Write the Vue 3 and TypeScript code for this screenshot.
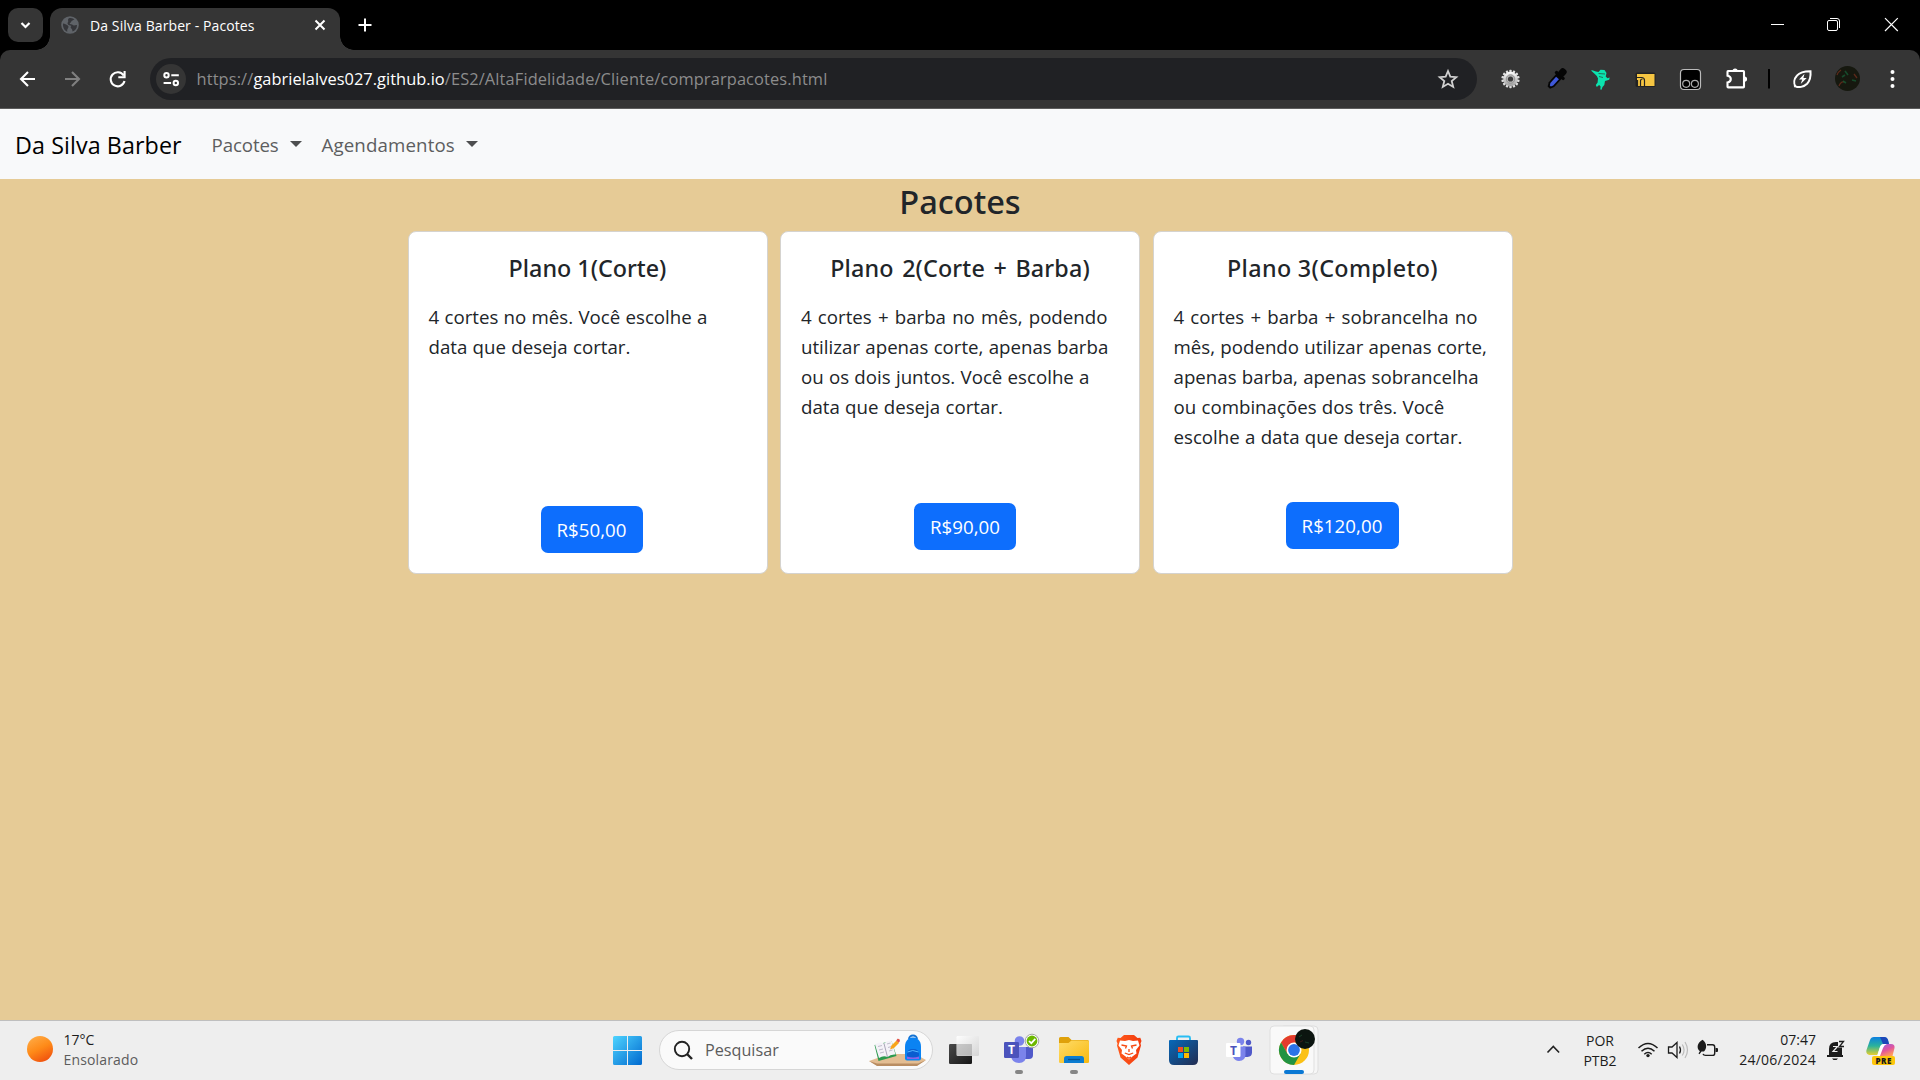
<script setup lang="ts">
interface Plan { id: string; title: string; lines: string[]; price: string }

const plans: Plan[] = [
  { id: 'p1', title: 'Plano 1(Corte)', lines: ['4 cortes no mês. Você escolhe a', 'data que deseja cortar.'], price: 'R$50,00' },
  { id: 'p2', title: 'Plano 2(Corte + Barba)', lines: ['4 cortes + barba no mês, podendo', 'utilizar apenas corte, apenas barba', 'ou os dois juntos. Você escolhe a', 'data que deseja cortar.'], price: 'R$90,00' },
  { id: 'p3', title: 'Plano 3(Completo)', lines: ['4 cortes + barba + sobrancelha no', 'mês, podendo utilizar apenas corte,', 'apenas barba, apenas sobrancelha', 'ou combinações dos três. Você', 'escolhe a data que deseja cortar.'], price: 'R$120,00' },
]
const menus = ['Pacotes', 'Agendamentos']
const gearTeeth = Array.from({ length: 14 }, (_, i) => (i * 360) / 14)
</script>

<template>
  <div class="screen">
    <header class="tabstrip">
      <div class="tab-search"><svg width="35" height="34" viewBox="8 8 35 34"><path d="M21.500 23l4 4 4-4" fill="none" stroke="#fff" stroke-width="2.200" /></svg></div>
      <div class="tab">
        <svg class="globe" width="18" height="18" viewBox="0 0 18 18"><circle cx="9" cy="9" r="8.800" fill="#5f6368" /><path d="M2 7.500c2 .2 3.300 1 4.500 1.800 1.300.9 1.300 2 .3 3.200-.6.8-.8 2-.5 3.200C3.500 14.500 1.600 11.500 2 7.500zM8 2.200c2.600-.6 4.500.4 5.500 1.300-1.200.2-1.500 1-2.600 1.300-.9.3-.4 1.600-1.500 1.900-1.300.4-.6 1.600.6 1.500 1.500-.1 1.600 1.200 3 1.200 1 0 1.700-.5 3-.4.100 3.500-2 5.700-4.600 6.500.1-1.400-.2-2.200-1.100-2.900-1-.8-.8-1.800.1-2.500-1.200-.9-3.400-.9-3.800-2.400-.3-1.400.9-1.500.6-2.800-.2-.9-.3-2 .8-2.700z" fill="#35363a" /></svg>
        <span class="tab-title">Da Silva Barber - Pacotes</span>
        <svg class="tab-close" width="12" height="12" viewBox="0 0 12 12"><path d="M1.500 1.500l9 9m0-9l-9 9" stroke="#fff" stroke-width="2" /></svg>
      </div>
      <svg class="plus" width="14" height="14" viewBox="0 0 14 14"><path d="M7 .5v13M.5 7h13" stroke="#fff" stroke-width="2" /></svg>
      <svg class="winctl" width="150" height="50" viewBox="1770 0 150 50"><path d="M1771 24.500h13" stroke="#fff" /><rect x="1827.500" y="20.500" width="10" height="10" rx="1.500" fill="none" stroke="#fff" /><path d="M1830 18.500h7a2.500 2.500 0 0 1 2.500 2.500v7" fill="none" stroke="#fff" /><path d="M1885 18.200l12.800 12.800m0-12.800l-12.800 12.800" stroke="#fff" stroke-width="1.200" /></svg>
    </header>

    <div class="toolbar">
      <svg width="150" height="58" viewBox="0 50 150 58"><g fill="none" stroke-width="2.100"><path d="M35 79H21.500M28 72l-7 7 7 7" stroke="#fff" /><path d="M65 79h13.500M72 72l7 7-7 7" stroke="#808080" /><path d="M123.600 75.500A7 7 0 1 0 124.500 81M124.600 71v6.200h-6.300" stroke="#fff" /></g></svg>
      <div class="omnibox">
        <div class="site"><svg width="30" height="30" viewBox="156 64 30 30"><g fill="none" stroke="#fff" stroke-width="2"><circle cx="166.500" cy="75.300" r="2.200" /><circle cx="175.800" cy="83" r="2.200" /><path d="M171.300 75.300h7.500M163.600 83h7.500" /></g></svg></div>
        <p class="url"><span>https://</span><b>gabrielalves027.github.io</b><span class="path">/ES2/AltaFidelidade/Cliente/comprarpacotes.html</span></p>
        <svg class="star" width="22" height="22" viewBox="1436.500 68 22 22"><path d="M1447.500 71l2.300 5.600 6 .5-4.600 3.900 1.500 5.900-5.200-3.200-5.200 3.200 1.500-5.900-4.600-3.900 6-.5z" fill="none" stroke="#d0d0d0" stroke-width="1.800" /></svg>
      </div>
      <svg class="exts" width="432" height="58" viewBox="1488 50 432 58">
        <defs>
          <linearGradient id="gear" x1="0" y1="0" x2="0" y2="1"><stop offset="0" stop-color="#fff" /><stop offset="1" stop-color="#9c9c9c" /></linearGradient>
        </defs>
        <g transform="translate(1510.500 79)"><rect v-for="a in gearTeeth" :key="a" x="-1.200" y="-9.200" width="2.400" height="4" rx=".7" fill="#ddd" :transform="`rotate(${a})`" /><circle r="7.200" fill="url(#gear)" /><circle r="4.300" fill="#b5b5b5" stroke="#888" stroke-width=".8" /><circle r="2.600" fill="#3c3c3c" /></g>
        <g transform="translate(1557.500 78) rotate(42)"><path d="M-3.600-3h7.200v12l-2 4h-3.200l-2-4z" fill="#050505" /><path d="M-1.900 0h3.800v8.500l-1.200 2.200h-1.400l-1.200-2.200z" fill="#3f58d8" /><rect x="-6" y="-5" width="12" height="3.200" rx="1.200" fill="#050505" /><rect x="-3.600" y="-11.500" width="7.200" height="8" rx="3" fill="#050505" /></g>
        <path d="M1591.500 70l4.500 1.500 2.500.5 2-2.200 4 .2 2 3-.8 3.500 1.800 1.700 2.200-.7-.5 2.200-4.200 1.300-.7 4-1.800 2-1 2.800-1.200-.4.3-2.800-1.500-1.500-2.300 2-1-2 1.800-2.500.4-4.100-1.200-2.500-2-2-3.300-3z" fill="#0be3ae" /><path d="M1598.500 73.500l6.500.5M1599 76.500l4 1" stroke="#24624f" stroke-width=".9" />
        <rect x="1635.500" y="72.500" width="20" height="14.500" rx="1.500" fill="#222" /><rect x="1637" y="74" width="17.500" height="12" fill="#f5c542" /><path d="M1637 77.500h4.500q3 0 3 3V86M1640.500 86v-5q0-2 2-2M1637.500 80v6" stroke="#222" stroke-width="1.200" fill="none" />
        <rect x="1680.500" y="69.500" width="20" height="20" rx="3.500" fill="#000" stroke="#bbb" stroke-width="1.200" /><g fill="none" stroke="#aaa" stroke-width="1.200"><circle cx="1686.200" cy="83.800" r="3.500" /><circle cx="1694.900" cy="83.800" r="3.500" /></g>
        <path d="M1728 71h15.300q.7 0 .7.700v15q0 .7-.7.700h-15.100q-.7 0-.7-.7v-4.200q3.300-.5 3.300-3.400t-3.300-3.400v-4q0-.7.500-.7z" fill="none" stroke="#fff" stroke-width="2.100" /><path d="M1732.500 71a2.600 2.600 0 0 1 5.200 0zM1744.500 76.500a2.600 2.600 0 0 1 0 5.200z" fill="#fff" />
        <path d="M1768 69h2v19.500h-2z" fill="#000" />
        <path d="M1795.500 86.300c-2-3-1.600-7.400 1.400-10.600 3-3.400 7.800-4.600 13.600-4.500.4 5-.5 9.500-3.400 12.600-3.400 3.400-8.600 4-11.600 2.500zm.5-.8l-2 1" fill="none" stroke="#fff" stroke-width="2" /><path d="M1804.500 73.800l-5.500 5.800h3.200l-1.500 4.300 6-5.900h-3.300z" fill="#fff" />
        <circle cx="1847.500" cy="78.500" r="12.500" fill="#16180f" /><path d="M1837 75q1-3 4-5M1839 86q2-5 5-4M1854 74l3 4" stroke="#7b3120" stroke-width="1.300" fill="none" opacity=".7" /><path d="M1845 71l3 4M1843 81l3 2M1852 80l4 1M1842 77l3-2" stroke="#176037" stroke-width="1.600" fill="none" opacity=".7" />
        <g fill="#fff"><circle cx="1892.500" cy="72" r="2" /><circle cx="1892.500" cy="79" r="2" /><circle cx="1892.500" cy="86" r="2" /></g>
      </svg>
    </div>

    <nav class="navbar">
      <a class="brand">Da Silva Barber</a>
      <a v-for="item in menus" :key="item" class="menu" :class="item.toLowerCase()"><span>{{ item }}</span><i class="caret"></i></a>
    </nav>

    <main class="page">
      <h1>Pacotes</h1>
      <section class="cards">
        <article v-for="plan in plans" :key="plan.id" class="card" :class="plan.id">
          <h2>{{ plan.title }}</h2>
          <p class="desc"><span v-for="line in plan.lines" :key="line" class="line" :class="{ wide: line.includes('+') }">{{ line }}</span></p>
          <a class="btn">{{ plan.price }}</a>
        </article>
      </section>
    </main>

    <footer class="taskbar">
      <div class="weather">
        <svg width="26" height="26" viewBox="0 0 26 26"><defs><linearGradient id="sun" x1=".2" y1="0" x2=".7" y2="1"><stop offset="0" stop-color="#ffab45" /><stop offset=".5" stop-color="#fe8a18" /><stop offset="1" stop-color="#f0500e" /></linearGradient></defs><circle cx="13" cy="13" r="13" fill="url(#sun)" /></svg>
        <div class="stack"><span>17°C</span><span class="sky">Ensolarado</span></div>
      </div>
      <svg class="start" width="30" height="30" viewBox="613 1036 30 30"><defs><linearGradient id="win" gradientUnits="userSpaceOnUse" x1="613" y1="1036" x2="642" y2="1065"><stop offset="0" stop-color="#4ed4ff" /><stop offset="1" stop-color="#0069cf" /></linearGradient></defs><path d="M614.500 1036H627v14h-14v-12.500q0-1.500 1.500-1.500zM628 1036h12.500q1.500 0 1.500 1.500V1050h-14zM613 1051h14v14h-12.500q-1.500 0-1.500-1.500zM628 1051h14v12.500q0 1.500-1.500 1.500H628z" fill="url(#win)" /></svg>
      <div class="search">
        <svg class="mag" width="20" height="20" viewBox="673 1040 20 20"><circle cx="682" cy="1049" r="7.200" fill="none" stroke="#222" stroke-width="1.900" /><path d="M687 1054l5 5" stroke="#222" stroke-width="2.400" /></svg>
        <span>Pesquisar</span>
        <svg class="art" width="58" height="34" viewBox="868 1034 58 34">
          <path d="M869 1062l20-7h26l11 6-9 5.500h-40z" fill="#e3bd92" /><path d="M869 1062l8 2.500h41l8-3.500-9 6h-40z" fill="#b98d62" />
          <path d="M874.500 1046l17-4 5 15-18 5z" fill="#2c9a4e" /><path d="M875 1045.500q5-3.500 9-1 3-3.500 7.500-3l4 14q-5-.5-8 2.500-4-2-8.500 1z" fill="#f4f2f8" /><path d="M884 1044.500l3.500 13.500" stroke="#aaa6b8" /><path d="M878 1047.500l4-1M879 1051l4-1M880 1054l4-1M887 1045l3.500-1M888 1048.500l3.500-1M889 1052l3.500-1" stroke="#b9b5c6" stroke-width=".9" />
          <path d="M890 1050.500l1.500-4 5-5 2.500 2.500-5 5z" fill="#f8a51b" /><path d="M896.300 1041.800l1-2 2 .2.700 2-1.300 1.700z" fill="#e2574c" />
          <path d="M909 1040a4 3.500 0 0 1 8 0" fill="none" stroke="#1372d3" stroke-width="1.800" /><path d="M905 1048c0-7 4-9.500 8-9.500s8 2.500 8 9.500v11.500q0 2-2 2h-12q-2 0-2-2z" fill="#0b83f2" /><path d="M907 1055q0-5 6-5t6 5v5h-12z" fill="#0a5dd0" /><path d="M907 1057.500q6 2 12 0v2.500h-12z" fill="#8a63e8" /><path d="M907.500 1053q5-3 11 0" stroke="#54b8ff" fill="none" />
        </svg>
      </div>
      <svg width="385" height="59" viewBox="936 1021 385 59">
        <defs>
          <linearGradient id="dk" x1="0" y1="0" x2="1" y2="1"><stop offset="0" stop-color="#4a4a4a" /><stop offset="1" stop-color="#161616" /></linearGradient>
          <linearGradient id="lt" x1="0" y1="0" x2="1" y2="1"><stop offset="0" stop-color="#fff" /><stop offset="1" stop-color="#d2d2d2" /></linearGradient>
          <linearGradient id="fold" x1="0" y1="0" x2="1" y2="1"><stop offset="0" stop-color="#ffdc69" /><stop offset="1" stop-color="#f8b90f" /></linearGradient>
          <linearGradient id="store" x1="0" y1="0" x2="1" y2="1"><stop offset="0" stop-color="#0669ba" /><stop offset="1" stop-color="#232c50" /></linearGradient>
          <linearGradient id="brave" x1="0" y1="0" x2="1" y2="0"><stop offset="0" stop-color="#ff5a1c" /><stop offset="1" stop-color="#f23b0e" /></linearGradient>
        </defs>
        <rect x="949" y="1044" width="23" height="20" rx="1.200" fill="url(#dk)" /><rect x="956.500" y="1036" width="22.500" height="20" rx="1.200" fill="url(#lt)" opacity=".9" /><path d="M957 1044h15v11.500h-15z" fill="#999" opacity=".35" />
        <circle cx="1019.500" cy="1041" r="4.800" fill="#7b83eb" /><path d="M1023 1047h10v8q0 4-4 4h-5z" fill="#5059c9" /><path d="M1011 1047h15v9q0 7-7 7t-8-7z" fill="#7b83eb" /><rect x="1004" y="1042" width="15" height="16" rx="1.200" fill="#4b53bc" /><text x="1011.500" y="1054.300" class="glyph" fill="#fff">T</text>
        <circle cx="1032" cy="1041" r="6.800" fill="#fff" stroke="#a5a5a5" stroke-width="1" /><circle cx="1032" cy="1041" r="5.400" fill="#6bb700" /><path d="M1029 1041l2.300 2.200 4-4.300" fill="none" stroke="#fff" stroke-width="1.700" />
        <rect x="1015" y="1070" width="8" height="4" rx="2" fill="#858585" /><rect x="1070" y="1070" width="8" height="4" rx="2" fill="#858585" />
        <path d="M1059 1038.500q0-1.500 1.500-1.500h8l3 3h16q1.500 0 1.500 1.500v8h-30z" fill="#dfa10b" /><path d="M1059 1043h9.500l3-2.500h16q1.500 0 1.500 1.500v20q0 1-1.500 1h-27q-1.500 0-1.500-1z" fill="url(#fold)" /><path d="M1064 1063v-4.500q0-2.500 2.500-2.500h15q2.500 0 2.500 2.500v4.500z" fill="#0c7dd1" /><path d="M1068 1059.500h12" stroke="#08538f" stroke-width="1.300" />
        <path d="M1120.500 1038l3.500-3h10l3.500 3 2.800-.2 1.200 3.200-1 2.500.5 2-3.500 12-8.500 7.500-8.500-7.500-3.500-12 .5-2-1-2.500 1.200-3.200z" fill="url(#brave)" /><path d="M1120 1040.500l5 .5 4-1 4 1 5-.5 1.500 5-3.500 4.500.5 3.500-3.500 2.500-4 3.500-4-3.500-3.500-2.500.5-3.500-3.500-4.500z" fill="#fff" /><path d="M1121.500 1045l5 1-1 2.500M1136.500 1045l-5 1 1 2.500M1129 1049v3M1124.800 1053l4.200 1.500 4.200-1.500M1127 1057l2 1.200 2-1.200" fill="none" stroke="#f6480f" stroke-width="1.300" />
        <path d="M1177 1042v-4q0-1.500 1.500-1.500h10q1.500 0 1.500 1.500v4" fill="none" stroke="#29bdf3" stroke-width="1.900" /><path d="M1169 1041q0-1 1-1h27q1 0 1 1v19q0 5-5 5h-19q-5 0-5-5z" fill="url(#store)" /><path d="M1178 1047h5v5h-5z" fill="#f25022" /><path d="M1184 1047h5v5h-5z" fill="#7fba00" /><path d="M1178 1053h5v5h-5z" fill="#00a4ef" /><path d="M1184 1053h5v5h-5z" fill="#ffb900" />
        <circle cx="1240.500" cy="1041.500" r="3.700" fill="#7b83eb" /><circle cx="1248.500" cy="1042.500" r="2.700" fill="#5059c9" /><path d="M1243 1046.500h9v6q0 4-4.500 4.500h-4.500z" fill="#5059c9" /><path d="M1233 1046.500h12.500v8q0 6.500-6.500 6.500-4 0-6-4z" fill="#7b83eb" /><rect x="1226" y="1043" width="14.500" height="14" rx="1" fill="#fff" /><text x="1233.500" y="1054.500" class="glyph" fill="#4b53bc">T</text>
        <rect x="1280" y="1026" width="38" height="48" rx="4" fill="#f6f6f6" stroke="#dedede" /><rect x="1270" y="1026" width="44" height="48" rx="4" fill="#f9f9f9" stroke="#dfdfdf" />
        <g transform="translate(1294 1050)"><circle r="15" fill="#fbc116" /><path d="M-13-7.500A15 15 0 0 1 13-7.500H0L-6.500 3.700z" fill="#e33b2e" /><path d="M-13-7.500A15 15 0 0 0 0 15L6.500 3.700-6.500 3.700z" fill="#229342" /><circle r="7.500" fill="#fff" /><circle r="5.900" fill="#2a73e8" /></g>
        <circle cx="1305" cy="1039" r="10" fill="#0c1510" /><path d="M1299 1037l3-2M1305 1042l4 1" stroke="#1a4028" /><path d="M1300 1042l3-1.500" stroke="#401c18" />
        <rect x="1284" y="1070" width="20" height="4" rx="2" fill="#0a78d4" />
      </svg>
      <svg class="chev" width="16" height="10" viewBox="1546 1044 16 10"><path d="M1547.500 1052.500l5.800-6 5.800 6" fill="none" stroke="#222" stroke-width="1.600" /></svg>
      <div class="stack lang"><span>POR</span><span>PTB2</span></div>
      <svg class="status" width="86" height="24" viewBox="1636 1038 86 24">
        <g fill="none" stroke="#1c1c1c" stroke-width="1.500"><path d="M1638.500 1048q9.500-9 19 0M1641.500 1051.200q6.500-6 13 0M1644.300 1054.200q3.700-3.300 7.400 0" /></g><circle cx="1648" cy="1055.600" r="1.700" fill="#1c1c1c" />
        <path d="M1668.500 1047h3.500l5-4.500v15l-5-4.500h-3.500z" fill="none" stroke="#1c1c1c" stroke-width="1.300" /><path d="M1679.500 1046.500q2 3.500 0 7" fill="none" stroke="#1c1c1c" stroke-width="1.300" /><path d="M1682.300 1044.500q3.500 5.500 0 11M1685 1042q5 8 0 16" fill="none" stroke="#bbb" stroke-width="1.200" />
        <path d="M1707 1044.700h5.500q2.200 0 2.200 2.200v6.300q0 2.200-2.200 2.200h-7q-2 0-2.500-1.500" fill="none" stroke="#1c1c1c" stroke-width="1.400" /><path d="M1715.500 1048h1.500q1 0 1 1v2q0 1-1 1h-1.500z" fill="#1c1c1c" /><path d="M1702.500 1039.800c4.500 3.200 4.700 8.700 1.500 11.700h-2.500l-2 2.700-1-.8 1.400-2.200c-4-3-2.400-8.700 2.600-11.400z" fill="#1c1c1c" />
      </svg>
      <div class="stack clock"><span>07:47</span><span class="date">24/06/2024</span></div>
      <svg class="bell" width="20" height="22" viewBox="1826 1039 20 22"><path d="M1829 1056v-7q0-7 7-7h2v5.500h4V1056zM1827 1055h16v2h-16zM1832 1058.500h6l-1.500 1.500h-3z" fill="#1c1c1c" /><path d="M1833 1046.500h4.500l-4.500 5h4.500" fill="none" stroke="#eee" stroke-width="1.200" /><path d="M1839 1041.500h4.500l-4 5h4.500" fill="none" stroke="#1c1c1c" stroke-width="1.300" /></svg>
      <svg class="copilot" width="30" height="30" viewBox="1866 1036 30 30">
        <defs><linearGradient id="ca" x1="0" y1="0" x2="0" y2="1"><stop offset="0" stop-color="#0b7fe0" /><stop offset=".5" stop-color="#2bb39b" /><stop offset="1" stop-color="#e9cf2c" /></linearGradient><linearGradient id="cb" x1="0" y1="0" x2=".6" y2="1"><stop offset="0" stop-color="#8a5ff0" /><stop offset=".6" stop-color="#e2559b" /><stop offset="1" stop-color="#ff9a5c" /></linearGradient></defs>
        <path d="M1874 1037h10q3 0 4 3l1 4h-5q-3 0-4 3l-2.500 8h-8q-4-1-3-5l3.500-10q1-3 4-3z" fill="url(#ca)" /><path d="M1880 1037h4q3 0 4 3l1 4h-6z" fill="#1c47b8" /><path d="M1886 1044h5q4 0 3.500 4l-2 8h-15l3-8q1.500-4 5.500-4z" fill="url(#cb)" /><path d="M1884 1044q-3 0-4 3l-3 9h3l3-8q1-3 4-4z" fill="#fff" />
        <rect x="1872" y="1056" width="23" height="9" rx="2" fill="#fdc60b" /><text x="1883.700" y="1063.500" class="pre" fill="#1a1a1a">PRE</text>
      </svg>
    </footer>
  </div>
</template>

<style>
html, body { margin: 0; overflow: hidden; }
</style>

<style scoped>
.screen { width: 1920px; height: 1080px; display: flex; flex-direction: column; overflow: hidden; font-family: "Open Sans", "Noto Sans", sans-serif; background: #000; }
svg { display: block; flex: none; }
.tabstrip { flex: none; height: 50px; background: #000; display: flex; align-items: flex-start; }
.tab-search { position: relative; z-index: 1; width: 35px; height: 34px; margin: 8px 7px 0 8px; border-radius: 10px; background: #353535; }
.tab { position: relative; box-sizing: border-box; width: 290px; height: 42px; margin-top: 8px; padding: 0 14px 8px 11px; border-radius: 12px 12px 0 0; background: #353535; display: flex; align-items: center; }
.tab::before, .tab::after { content: ""; position: absolute; bottom: 0; width: 14px; height: 14px; }
.tab::before { left: -14px; background: radial-gradient(circle at 0 0, #000 13.5px, #353535 14px); }
.tab::after { right: -14px; background: radial-gradient(circle at 100% 0, #000 13.5px, #353535 14px); }
.tab-title { margin: 1px 0 0 11px; font-size: 14px; letter-spacing: .1px; color: #fff; line-height: 20px; white-space: nowrap; }
.tab-close { margin-left: auto; }
.plus { margin: 18px 0 0 18px; }
.winctl { margin-left: auto; }
.toolbar { flex: none; box-sizing: border-box; height: 59px; background: #353535; border-bottom: 1px solid #5c5c5c; display: flex; border-radius: 10px 10px 0 0; }
.omnibox { width: 1327px; height: 42px; margin-top: 8px; border-radius: 21px; background: #202124; display: flex; align-items: center; }
.site { width: 30px; height: 30px; margin-left: 6px; border-radius: 50%; background: #353535; }
.url { margin: 0 0 0 10.500px; font-size: 16.400px; letter-spacing: .12px; color: #8c8c8c; line-height: 24px; display: flex; }
.url b { font-weight: 400; letter-spacing: .04px; color: #fff; }
.star { margin: 0 18.500px 0 auto; }
.exts { margin-left: 11px; }
.navbar { flex: none; height: 70px; background: #f8f9fa; display: flex; align-items: center; }
.brand { margin: 1px 0 0 15px; width: 196.500px; font-size: 23.300px; letter-spacing: .08px; color: #000; }
.menu { font-size: 18.700px; letter-spacing: .13px; color: #5d5e5f; display: flex; align-items: center; }
.menu.pacotes { width: 110px; letter-spacing: -.1px; }
.caret { margin-left: 11px; border: 6px solid transparent; border-top-color: #4d4e4f; border-bottom: 0; }
.page { flex: 1; min-height: 0; background: #e6cb96; color: #212529; }
h1 { margin: 0; height: 52px; text-align: center; font: 500 32.600px/45px "Noto Sans", sans-serif; }
.cards { display: flex; justify-content: center; gap: 12.500px; }
.card { box-sizing: border-box; width: 360px; height: 343px; padding: 0 20px; background: #fff; border: 1px solid #d5d3cf; border-radius: 8px; display: flex; flex-direction: column; align-items: flex-start; }
h2 { margin: 20px 0 0; width: 100%; text-align: center; font: 500 23.300px/32px "Noto Sans", sans-serif; }
.p2 h2 { letter-spacing: .15px; word-spacing: 2.300px; }
.p3 h2 { letter-spacing: .35px; }
.desc { margin: 18px 0 0; font-size: 18.700px; line-height: 30px; height: 204px; white-space: nowrap; word-spacing: .4px; }
.line { display: block; }
.wide { word-spacing: 1.300px; }
.btn { width: 102px; height: 47px; border-radius: 7px; background: #0d6efd; color: #fff; font-size: 18.700px; letter-spacing: .05px; display: flex; align-items: center; justify-content: center; margin-left: 112px; }
.p2 .btn { margin: -3px 0 0 113px; }
.p3 .btn { margin-top: -4px; width: 113px; }
.taskbar { flex: none; box-sizing: border-box; height: 60px; border-top: 1px solid #bfbfbf; background: #eee; display: flex; align-items: flex-start; }
.weather { display: flex; width: 586px; padding-left: 27px; }
.weather svg { margin: 15px 10.500px 0 0; }
.stack { display: flex; flex-direction: column; font-size: 14px; line-height: 20px; margin-top: 9px; color: #1c1c1c; }
.sky { color: #5c5c5c; letter-spacing: .15px; }
.start { margin-top: 15px; }
.search { box-sizing: border-box; width: 274px; height: 40px; margin: 9px 3px 0 16px; border: 1px solid #d6d6d6; border-radius: 20px; background: #fafafa; display: flex; align-items: center; font-size: 16.200px; color: #5c5c5c; }
.mag { margin: 0 12px 0 13px; }
.art { margin: 0 6px 0 auto; }
.glyph { font: bold 12px "Open Sans", sans-serif; text-anchor: middle; }
.pre { font: 800 8px "Open Sans", sans-serif; text-anchor: middle; letter-spacing: .5px; }
.chev { margin: 23px 22px 0 225px; }
.lang { width: 32px; align-items: center; margin-top: 10px; }
.status { margin: 17px 17px 0 20px; }
.clock { width: 77px; align-items: flex-end; }
.date { letter-spacing: .25px; }
.bell { margin: 18px 20px 0 10px; }
.copilot { margin-top: 15px; }
</style>
